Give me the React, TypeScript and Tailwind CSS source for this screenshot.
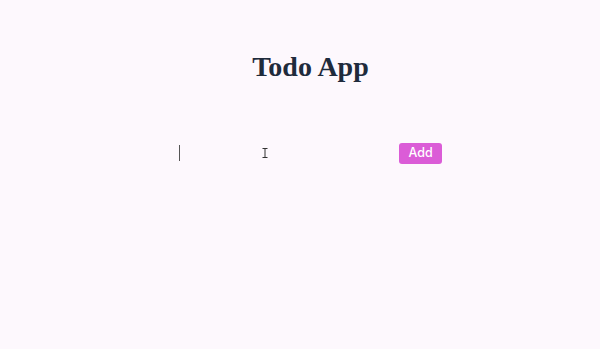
import { useState } from 'react';

export default function App() {
  const [text, setText] = useState('');

  return (
    <div className="min-h-[349px] w-full bg-[#fdf8fd] flex flex-col items-center">
      <h1 className="mt-[49px] ml-[21px] text-[28px] leading-[36px] font-bold text-[#1f2b3c] [font-family:'Liberation_Serif','DejaVu_Serif',serif]">
        Todo App
      </h1>

      <form
        className="mt-[57px] flex items-center gap-[9px] ml-[20px]"
        onSubmit={(e) => e.preventDefault()}
      >
        <div className="relative w-[212px] h-[22px]">
          <input
            value={text}
            onChange={(e) => setText(e.target.value)}
            className="w-full h-full bg-transparent outline-none border-none text-sm text-[#1f2b3c] [font-family:'Inter',sans-serif]"
          />
          {/* caret */}
          <span className="pointer-events-none absolute left-[1px] top-[3px] w-px h-[16px] bg-[#555]" />
          {/* mouse I-beam */}
          <svg
            className="pointer-events-none absolute left-[84px] top-[6px]"
            width="6"
            height="10"
            viewBox="0 0 6 10"
          >
            <path d="M0.5 0.5h5M0.5 9.5h5M3 0.5v9" stroke="#333" strokeWidth="1" fill="none" />
          </svg>
        </div>
        <button
          type="submit"
          className="h-[21px] w-[43px] rounded-[3px] bg-[#db5cd7] text-white text-[12.5px] font-medium [font-family:'Inter',sans-serif] flex items-center justify-center"
        >
          Add
        </button>
      </form>
    </div>
  );
}
